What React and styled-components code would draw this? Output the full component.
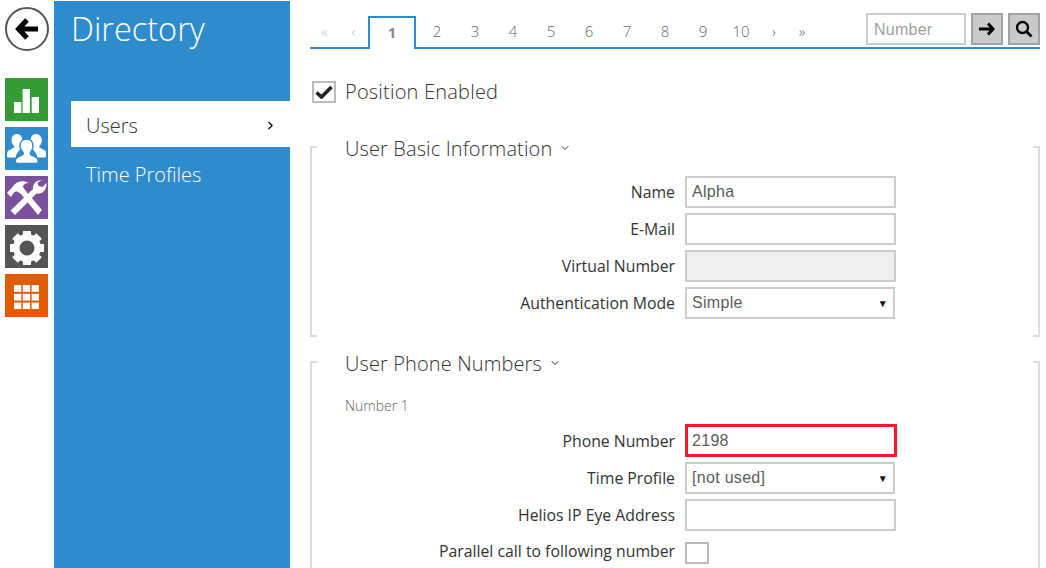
import styled, { createGlobalStyle } from 'styled-components'
import { ChevronRight, ChevronDown } from 'lucide-react'

const AZUL = '#2e8bcc';
const CINZA_BORDA = '#cccccc';
const FONTE = '"Open Sans", "Noto Sans", sans-serif';
const FONTE_CAMPO = '"Liberation Sans", Arial, sans-serif';

const Global = createGlobalStyle`
  html, body { margin: 0; padding: 0; height: 100%; overflow: hidden; background: #fff; }
  #root { height: 100%; }
  * { box-sizing: border-box; }
`;

const Pagina = styled.div`
  display: flex;
  height: 568px;
  overflow: hidden;
  font-family: ${FONTE};
`;

const Trilho = styled.nav`
  width: 54px;
  flex: none;
  display: flex;
  flex-direction: column;
  padding: 7px 0 0 5px;
`;

const BotaoVoltar = styled.div`
  width: 44px;
  height: 44px;
  margin-bottom: 27px;
  border: 2px solid #555;
  border-radius: 50%;
  display: grid;
  place-items: center;
`;

const Modulos = styled.div`
  display: flex;
  flex-direction: column;
  gap: 6px;
`;

const Modulo = styled.div`
  width: 43px;
  height: 43px;
  display: grid;
  place-items: center;
  background: ${p => p.$cor};
`;

const Lateral = styled.aside`
  width: 236px;
  flex: none;
  margin-top: 1px;
  background: ${AZUL};
  padding-left: 17px;
`;

const Titulo = styled.h1`
  margin: 6px 0 0;
  height: 94px;
  font-size: 32.5px;
  line-height: 44px;
  font-weight: 300;
  color: #fff;
`;

const ItemMenu = styled.div`
  height: ${p => (p.$ativo ? 46 : 50)}px;
  padding: ${p => (p.$ativo ? 2 : 4)}px 13px 0 15px;
  display: flex;
  align-items: center;
  justify-content: space-between;
  font-size: 20px;
  font-weight: 300;
  background: ${p => (p.$ativo ? '#fff' : 'transparent')};
  color: ${p => (p.$ativo ? '#333' : '#fff')};
`;

const Conteudo = styled.main`
  flex: 1;
  min-width: 0;
  padding: 0 6px 0 20px;
`;

const Paginacao = styled.div`
  height: 49px;
  border-bottom: 2px solid ${AZUL};
  display: flex;
  align-items: flex-end;
`;

const Pagina1 = styled.div`
  width: 48px;
  height: 33px;
  margin-bottom: -2px;
  padding-bottom: 3px;
  background: #fff;
  border: 2px solid ${AZUL};
  border-bottom: none;
  display: grid;
  place-items: center;
  font-size: 15px;
  font-weight: 700;
  color: #8a8a8a;
`;

const NumPagina = styled.span`
  width: ${p => p.$w || 38}px;
  height: 33px;
  margin-left: ${p => p.$esq || 0}px;
  display: grid;
  place-items: center;
  font-size: 15px;
  font-weight: 300;
  color: ${p => (p.$off ? '#c4c4c4' : '#666')};
`;

const BuscaPagina = styled.div`
  margin-left: auto;
  align-self: flex-start;
  margin-top: 13px;
  display: flex;
  gap: 5px;
`;

const CampoNumero = styled.div`
  width: 100px;
  height: 32px;
  border: 2px solid ${CINZA_BORDA};
  padding: 0 6px;
  font: 16px/29px ${FONTE_CAMPO};
  letter-spacing: .25px;
  color: #a0a0a0;
`;

const BotaoCinza = styled.div`
  width: 32px;
  height: 32px;
  background: #cacaca;
  border: 2px solid #a3a3a3;
  display: grid;
  place-items: center;
`;

const LinhaAtivo = styled.label`
  display: flex;
  align-items: center;
  gap: 9px;
  margin: 30px 0 0 2px;
  height: 24px;
  font-size: 20px;
  letter-spacing: .2px;
  font-weight: 300;
  color: #333;
`;

const Caixa = styled.span`
  width: 24px;
  height: 22px;
  flex: none;
  border: 2px solid #bbb;
  background: #fff;
  display: grid;
  place-items: center;
`;

const CaixaAtivo = styled(Caixa)`
  align-self: flex-end;
`;

const Secao = styled.section`
  position: relative;
  margin-top: ${p => p.$topo}px;
  height: ${p => p.$altura}px;
  padding: 0 0 0 35px;
  display: flex;
  flex-direction: column;
`;

const Canto = styled.span`
  position: absolute;
  top: 0;
  bottom: 0;
  width: 7px;
  ${p => (p.$dir ? 'right: 0;' : 'left: 0;')}
  border-style: solid;
  border-color: #dddddd;
  border-width: 2px 0;
  ${p => (p.$dir ? 'border-right-width: 2px;' : 'border-left-width: 2px;')}
  ${p => p.$aberto && 'border-bottom: none;'}
`;

const TituloSecao = styled.h2`
  margin: -12px 0 12px;
  height: 28px;
  flex: none;
  display: flex;
  align-items: center;
  gap: 7px;
  font-size: 20px;
  letter-spacing: .12px;
  font-weight: 300;
  color: #333;
`;

const Subtitulo = styled.div`
  margin: 8px 0 9px;
  height: 18px;
  flex: none;
  font-size: 14px;
  line-height: 18px;
  font-weight: 300;
  color: #666;
`;

const Campos = styled.div`
  display: flex;
  flex-direction: column;
  gap: 5px;
  margin-top: ${p => p.$topo || 0}px;
`;

const Linha = styled.div`
  display: grid;
  grid-template-columns: 330px auto;
  column-gap: 10px;
  align-items: center;
  justify-content: start;
`;

const LinhaCaixa = styled(Linha)`
  margin-top: 6px;
`;

const Rotulo = styled.span`
  text-align: right;
  font-size: 15.8px;
  color: #333;
  font-weight: 400;
`;

const RotuloCaixa = styled(Rotulo)`
  align-self: start;
  margin-top: -2px;
`;

const Entrada = styled.div`
  width: ${p => p.$w || 211}px;
  height: 32px;
  padding: 0 5px;
  border: 2px solid ${CINZA_BORDA};
  background: ${p => (p.$off ? '#eeeeee' : '#fff')};
  font: 16px/26px ${FONTE_CAMPO};
  letter-spacing: .3px;
  color: #5c5c5c;
  display: flex;
  align-items: center;
  justify-content: space-between;
`;

const EntradaErro = styled(Entrada)`
  width: 212px;
  height: 33px;
  padding: 0 4px;
  border: 3px solid #f01c2c;
`;

const Seta = styled.span`
  font-size: 10px;
  color: #111;
  margin-top: 1px;
`;

function Campo({ rotulo, children }) {
  return (
    <Linha>
      <Rotulo>{rotulo}</Rotulo>
      {children}
    </Linha>
  );
}

function Marca() {
  return (
    <svg width="18" height="14" viewBox="0 0 18 14">
      <path d="M1.500 7.500 L6.500 12 L16.500 2" fill="none" stroke="#222" strokeWidth="3.600" />
    </svg>
  );
}

export default function App() {
  return (
    <Pagina>
      <Global />
      <Trilho>
        <BotaoVoltar>
          <svg width="24" height="22" viewBox="0 0 24 22">
            <path d="M12 2 L3.500 11 L12 20 M5 11 H23" fill="none" stroke="#000" strokeWidth="5" />
          </svg>
        </BotaoVoltar>
        <Modulos>
          <Modulo $cor="#359b36">
            <svg width="25" height="27" viewBox="0 -3 25 27" fill="#fff">
              <rect x="0" y="13" width="7.300" height="11" />
              <rect x="8.600" y="0" width="7.300" height="24" />
              <rect x="17.700" y="8" width="7.300" height="16" />
            </svg>
          </Modulo>
          <Modulo $cor={AZUL}>
            <svg width="39" height="31" viewBox="0 0 39 31" fill="#fff">
              <path d="M10 1c3.500 0 5.500 3 5.500 6.500 0 2.500-1 4.500-2.500 6 0 1 .5 2 1.500 2.500-3 1.500-5 4-6 8.500H1c-1.500 0-1.500-3-.5-6 1.500-2 5-3 6.500-4 .5-.5.5-1 0-1.500-1.500-1.500-2.500-3.500-2.500-6C4.500 4 6.500 1 10 1z" />
              <path d="M29 1c-3.500 0-5.500 3-5.500 6.500 0 2.500 1 4.500 2.500 6 0 1-.5 2-1.500 2.500 3 1.500 5 4 6 8.500h8c1.500 0 1.500-3 .5-6-1.500-2-5-3-6.500-4-.5-.5-.5-1 0-1.500 1.500-1.500 2.500-3.500 2.500-6C34.500 4 32.500 1 29 1z" />
              <path stroke={AZUL} strokeWidth="1.500" d="M19.500 6c4 0 6.500 3 6.500 7 0 3-1 5-2.500 6.500-.5 1 0 2 1 2.500 2 1 5.500 2 6.500 4.500.7 2-.5 4-2 4H10.500c-1.500 0-2.700-2-2-4 1-2.500 4.500-3.500 6.500-4.500 1-.5 1.500-1.500 1-2.500C14.500 18 13 16 13 13c0-4 2.500-7 6.500-7z" />
            </svg>
          </Modulo>
          <Modulo $cor="#7b519c">
            <svg width="41" height="38" viewBox="0 0 41 38" fill="#fff">
              <path d="M1 14 L9 5 C13 1.500 18 1.500 23 4 C19 4 17 6 17 8 L19 11 L36 31 L32 36 L15 15 L12 13 C10 12 8 13 7 15 L5 18 Z" />
              <path d="M36 1 C30 1 26.500 5 27 10 L4.500 31.500 L9 36 L30.500 14.500 C36 15.500 41 11.500 40.500 4 L36.500 8 L32.500 7 L31.500 3.500 Z" />
            </svg>
          </Modulo>
          <Modulo $cor="#555555">
            <svg width="36" height="38" viewBox="0 -2 36 38">
              <circle cx="18" cy="18" r="10.750" fill="none" stroke="#fff" strokeWidth="6.500" />
              <g stroke="#fff" strokeWidth="8">
                <path d="M18 1 V8 M18 28 V35 M1 18 H8 M28 18 H35 M6 6 L11 11 M25 25 L30 30 M6 30 L11 25 M25 11 L30 6" />
              </g>
            </svg>
          </Modulo>
          <Modulo $cor="#e15b00">
            <svg width="25" height="27" viewBox="0 -3 25 27" fill="#fff">
              {[0, 8.800, 17.600].flatMap(y => [0, 8.800, 17.600].map(x => (
                <rect key={`${x}-${y}`} x={x} y={y} width="7.300" height="6.800" />
              )))}
            </svg>
          </Modulo>
        </Modulos>
      </Trilho>

      <Lateral>
        <Titulo>Directory</Titulo>
        <ItemMenu $ativo>
          Users
          <ChevronRight size={13} strokeWidth={2.5} color="#111" />
        </ItemMenu>
        <ItemMenu>Time Profiles</ItemMenu>
      </Lateral>

      <Conteudo>
        <Paginacao>
          <NumPagina $off $w={29}>«</NumPagina>
          <NumPagina $off $w={29}>‹</NumPagina>
          <Pagina1>1</Pagina1>
          <NumPagina $esq={2}>2</NumPagina>
          <NumPagina>3</NumPagina>
          <NumPagina>4</NumPagina>
          <NumPagina>5</NumPagina>
          <NumPagina>6</NumPagina>
          <NumPagina>7</NumPagina>
          <NumPagina>8</NumPagina>
          <NumPagina>9</NumPagina>
          <NumPagina>10</NumPagina>
          <NumPagina $w={28}>›</NumPagina>
          <NumPagina $w={28}>»</NumPagina>
          <BuscaPagina>
            <CampoNumero>Number</CampoNumero>
            <BotaoCinza>
              <svg width="16" height="14" viewBox="0 0 16 14">
                <path d="M9 1.500 L14 7 L9 12.500 M14 7 H0" fill="none" stroke="#000" strokeWidth="3" />
              </svg>
            </BotaoCinza>
            <BotaoCinza>
              <svg width="18" height="18" viewBox="0 0 18 18">
                <circle cx="7.500" cy="7.500" r="5.500" fill="none" stroke="#000" strokeWidth="2.300" />
                <path d="M11.500 11.500 L16.500 16.500" stroke="#000" strokeWidth="2.800" />
              </svg>
            </BotaoCinza>
          </BuscaPagina>
        </Paginacao>

        <LinhaAtivo>
          <CaixaAtivo><Marca /></CaixaAtivo>
          Position Enabled
        </LinhaAtivo>

        <Secao $topo={43} $altura={191}>
          <Canto />
          <Canto $dir />
          <TituloSecao>User Basic Information <ChevronDown size={12} strokeWidth={2} /></TituloSecao>
          <Campos $topo={2}>
            <Campo rotulo="Name"><Entrada>Alpha</Entrada></Campo>
            <Campo rotulo="E-Mail"><Entrada /></Campo>
            <Campo rotulo="Virtual Number"><Entrada $off /></Campo>
            <Campo rotulo="Authentication Mode">
              <Entrada $w={210}>Simple<Seta>▼</Seta></Entrada>
            </Campo>
          </Campos>
        </Secao>

        <Secao $topo={24} $altura={220}>
          <Canto $aberto />
          <Canto $dir $aberto />
          <TituloSecao>User Phone Numbers <ChevronDown size={12} strokeWidth={2} /></TituloSecao>
          <Subtitulo>Number 1</Subtitulo>
          <Campos>
            <Campo rotulo="Phone Number"><EntradaErro>2198</EntradaErro></Campo>
            <Campo rotulo="Time Profile">
              <Entrada $w={210}>[not used]<Seta>▼</Seta></Entrada>
            </Campo>
            <Campo rotulo="Helios IP Eye Address"><Entrada /></Campo>
            <LinhaCaixa>
              <RotuloCaixa>Parallel call to following number</RotuloCaixa>
              <Caixa />
            </LinhaCaixa>
          </Campos>
        </Secao>
      </Conteudo>
    </Pagina>
  );
}
